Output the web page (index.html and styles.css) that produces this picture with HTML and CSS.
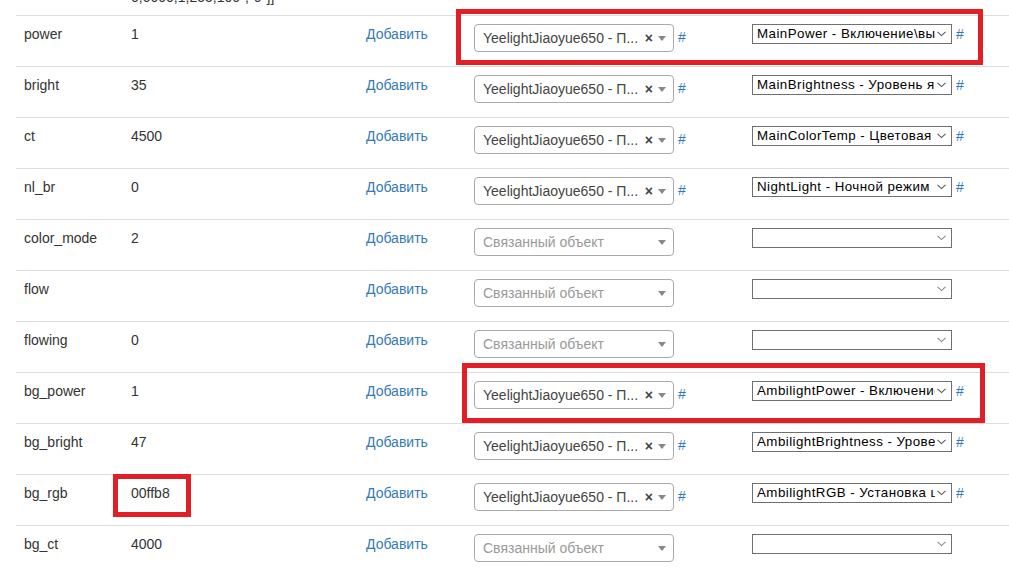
FILE: index.html
```html
<!DOCTYPE html>
<html>
<head>
<meta charset="utf-8">
<link rel="stylesheet" href="styles.css">
</head>
<body>
<div class="table">
  <div class="row partial">
    <div class="cell"></div>
    <div class="cell">0,0000,1,255,100","0"]]</div>
    <div class="cell"></div><div class="cell"></div><div class="cell"></div>
  </div>

  <div class="row">
    <div class="cell">power</div><div class="cell">1</div>
    <div class="cell"><a class="link">Добавить</a></div>
    <div class="cell pick"><div class="s2"><span class="s2-text">YeelightJiaoyue650 - П...</span><span class="s2-clear">×</span><span class="s2-arrow"></span></div><a class="hash h1">#</a></div>
    <div class="cell pick"><div class="nsel"><span class="nsel-text">MainPower - Включение\выключение</span><svg class="chev" width="9" height="6" viewBox="0 0 9 6"><polyline points="0.5,0.8 4.5,4.6 8.5,0.8" fill="none" stroke="#555" stroke-width="1.1"/></svg></div><a class="hash h2">#</a></div>
  </div>

  <div class="row">
    <div class="cell">bright</div><div class="cell">35</div>
    <div class="cell"><a class="link">Добавить</a></div>
    <div class="cell pick"><div class="s2"><span class="s2-text">YeelightJiaoyue650 - П...</span><span class="s2-clear">×</span><span class="s2-arrow"></span></div><a class="hash h1">#</a></div>
    <div class="cell pick"><div class="nsel"><span class="nsel-text">MainBrightness - Уровень яркости</span><svg class="chev" width="9" height="6" viewBox="0 0 9 6"><polyline points="0.5,0.8 4.5,4.6 8.5,0.8" fill="none" stroke="#555" stroke-width="1.1"/></svg></div><a class="hash h2">#</a></div>
  </div>

  <div class="row">
    <div class="cell">ct</div><div class="cell">4500</div>
    <div class="cell"><a class="link">Добавить</a></div>
    <div class="cell pick"><div class="s2"><span class="s2-text">YeelightJiaoyue650 - П...</span><span class="s2-clear">×</span><span class="s2-arrow"></span></div><a class="hash h1">#</a></div>
    <div class="cell pick"><div class="nsel"><span class="nsel-text">MainColorTemp - Цветовая температура</span><svg class="chev" width="9" height="6" viewBox="0 0 9 6"><polyline points="0.5,0.8 4.5,4.6 8.5,0.8" fill="none" stroke="#555" stroke-width="1.1"/></svg></div><a class="hash h2">#</a></div>
  </div>

  <div class="row">
    <div class="cell">nl_br</div><div class="cell">0</div>
    <div class="cell"><a class="link">Добавить</a></div>
    <div class="cell pick"><div class="s2"><span class="s2-text">YeelightJiaoyue650 - П...</span><span class="s2-clear">×</span><span class="s2-arrow"></span></div><a class="hash h1">#</a></div>
    <div class="cell pick"><div class="nsel"><span class="nsel-text">NightLight - Ночной режим</span><svg class="chev" width="9" height="6" viewBox="0 0 9 6"><polyline points="0.5,0.8 4.5,4.6 8.5,0.8" fill="none" stroke="#555" stroke-width="1.1"/></svg></div><a class="hash h2">#</a></div>
  </div>

  <div class="row">
    <div class="cell">color_mode</div><div class="cell">2</div>
    <div class="cell"><a class="link">Добавить</a></div>
    <div class="cell pick"><div class="s2"><span class="s2-text ph">Связанный объект</span><span class="s2-arrow"></span></div></div>
    <div class="cell pick"><div class="nsel"><span class="nsel-text"></span><svg class="chev" width="9" height="6" viewBox="0 0 9 6"><polyline points="0.5,0.8 4.5,4.6 8.5,0.8" fill="none" stroke="#888" stroke-width="1.1"/></svg></div></div>
  </div>

  <div class="row">
    <div class="cell">flow</div><div class="cell"></div>
    <div class="cell"><a class="link">Добавить</a></div>
    <div class="cell pick"><div class="s2"><span class="s2-text ph">Связанный объект</span><span class="s2-arrow"></span></div></div>
    <div class="cell pick"><div class="nsel"><span class="nsel-text"></span><svg class="chev" width="9" height="6" viewBox="0 0 9 6"><polyline points="0.5,0.8 4.5,4.6 8.5,0.8" fill="none" stroke="#888" stroke-width="1.1"/></svg></div></div>
  </div>

  <div class="row">
    <div class="cell">flowing</div><div class="cell">0</div>
    <div class="cell"><a class="link">Добавить</a></div>
    <div class="cell pick"><div class="s2"><span class="s2-text ph">Связанный объект</span><span class="s2-arrow"></span></div></div>
    <div class="cell pick"><div class="nsel"><span class="nsel-text"></span><svg class="chev" width="9" height="6" viewBox="0 0 9 6"><polyline points="0.5,0.8 4.5,4.6 8.5,0.8" fill="none" stroke="#888" stroke-width="1.1"/></svg></div></div>
  </div>

  <div class="row">
    <div class="cell">bg_power</div><div class="cell">1</div>
    <div class="cell"><a class="link">Добавить</a></div>
    <div class="cell pick"><div class="s2"><span class="s2-text">YeelightJiaoyue650 - П...</span><span class="s2-clear">×</span><span class="s2-arrow"></span></div><a class="hash h1">#</a></div>
    <div class="cell pick"><div class="nsel"><span class="nsel-text">AmbilightPower - Включение\выключение</span><svg class="chev" width="9" height="6" viewBox="0 0 9 6"><polyline points="0.5,0.8 4.5,4.6 8.5,0.8" fill="none" stroke="#555" stroke-width="1.1"/></svg></div><a class="hash h2">#</a></div>
  </div>

  <div class="row">
    <div class="cell">bg_bright</div><div class="cell">47</div>
    <div class="cell"><a class="link">Добавить</a></div>
    <div class="cell pick"><div class="s2"><span class="s2-text">YeelightJiaoyue650 - П...</span><span class="s2-clear">×</span><span class="s2-arrow"></span></div><a class="hash h1">#</a></div>
    <div class="cell pick"><div class="nsel"><span class="nsel-text">AmbilightBrightness - Уровень яркости</span><svg class="chev" width="9" height="6" viewBox="0 0 9 6"><polyline points="0.5,0.8 4.5,4.6 8.5,0.8" fill="none" stroke="#555" stroke-width="1.1"/></svg></div><a class="hash h2">#</a></div>
  </div>

  <div class="row">
    <div class="cell">bg_rgb</div><div class="cell">00ffb8</div>
    <div class="cell"><a class="link">Добавить</a></div>
    <div class="cell pick"><div class="s2"><span class="s2-text">YeelightJiaoyue650 - П...</span><span class="s2-clear">×</span><span class="s2-arrow"></span></div><a class="hash h1">#</a></div>
    <div class="cell pick"><div class="nsel"><span class="nsel-text">AmbilightRGB - Установка цвета</span><svg class="chev" width="9" height="6" viewBox="0 0 9 6"><polyline points="0.5,0.8 4.5,4.6 8.5,0.8" fill="none" stroke="#555" stroke-width="1.1"/></svg></div><a class="hash h2">#</a></div>
  </div>

  <div class="row">
    <div class="cell">bg_ct</div><div class="cell">4000</div>
    <div class="cell"><a class="link">Добавить</a></div>
    <div class="cell pick"><div class="s2"><span class="s2-text ph">Связанный объект</span><span class="s2-arrow"></span></div></div>
    <div class="cell pick"><div class="nsel"><span class="nsel-text"></span><svg class="chev" width="9" height="6" viewBox="0 0 9 6"><polyline points="0.5,0.8 4.5,4.6 8.5,0.8" fill="none" stroke="#888" stroke-width="1.1"/></svg></div></div>
  </div>
</div>

<div class="mark m1"></div>
<div class="mark m2"></div>
<div class="mark m3"></div>
</body>
</html>
```

FILE: styles.css
```css
html, body {
  margin: 0;
  padding: 0;
  background: #fff;
  overflow: hidden;
}
body {
  font-family: "Liberation Sans", Arial, sans-serif;
  font-size: 14px;
  line-height: 20px;
  color: #333;
  width: 1009px;
  height: 572px;
  position: relative;
}
.table {
  margin-left: 16px;
}
.row {
  display: grid;
  grid-template-columns: 107px 235px 108px 278px 1fr;
  height: 51px;
  box-sizing: border-box;
  border-top: 1px solid #ddd;
}
.row.partial {
  height: 15px;
  grid-template-rows: 15px;
  border-top: none;
  overflow: hidden;
  align-items: end;
}
.row.partial .cell {
  padding: 0 8px 8px 8px;
  height: 20px;
  white-space: nowrap;
}
.cell {
  padding: 8px;
  white-space: nowrap;
}
.link {
  color: #337ab7;
  text-decoration: none;
}
.pick {
  display: flex;
  align-items: flex-start;
}
.s2 {
  position: relative;
  box-sizing: border-box;
  width: 200px;
  height: 28px;
  border: 1px solid #aaa;
  border-radius: 4px;
  background: #fff;
  padding: 0 20px 0 8px;
  display: flex;
  align-items: center;
  line-height: 26px;
  color: #444;
  flex-shrink: 0;
}
.s2-text {
  flex: 1;
  overflow: hidden;
  text-overflow: ellipsis;
  white-space: nowrap;
}
.s2-text.ph {
  color: #999;
}
.s2-clear {
  font-weight: bold;
  font-size: 14px;
  margin-left: 4px;
}
.s2-arrow {
  position: absolute;
  right: 7px;
  top: 11px;
  width: 0;
  height: 0;
  border-style: solid;
  border-width: 5px 4px 0 4px;
  border-color: #888 transparent transparent transparent;
}
.hash {
  color: #337ab7;
  text-decoration: none;
}
.hash.h1 {
  margin-left: 4px;
  margin-top: 3px;
}
.hash.h2 {
  margin-left: 4px;
}
.nsel {
  position: relative;
  box-sizing: border-box;
  width: 200px;
  height: 20px;
  border: 1px solid #707070;
  background: #fff;
  flex-shrink: 0;
  display: flex;
  align-items: center;
  padding-left: 4px;
  font-size: 13.33px;
  letter-spacing: 0.45px;
  line-height: 18px;
  color: #000;
}
.nsel-text {
  flex: 1;
  overflow: hidden;
  white-space: nowrap;
}
.chev {
  flex-shrink: 0;
  margin: 0 5px 0 2px;
}
.mark {
  position: absolute;
  border: 5px solid #e21f26;
  box-sizing: border-box;
}
.m1 {
  left: 456px;
  top: 9px;
  width: 527px;
  height: 56px;
}
.m2 {
  left: 462px;
  top: 363px;
  width: 523px;
  height: 60px;
}
.m3 {
  left: 113px;
  top: 474px;
  width: 78px;
  height: 43px;
}
```
